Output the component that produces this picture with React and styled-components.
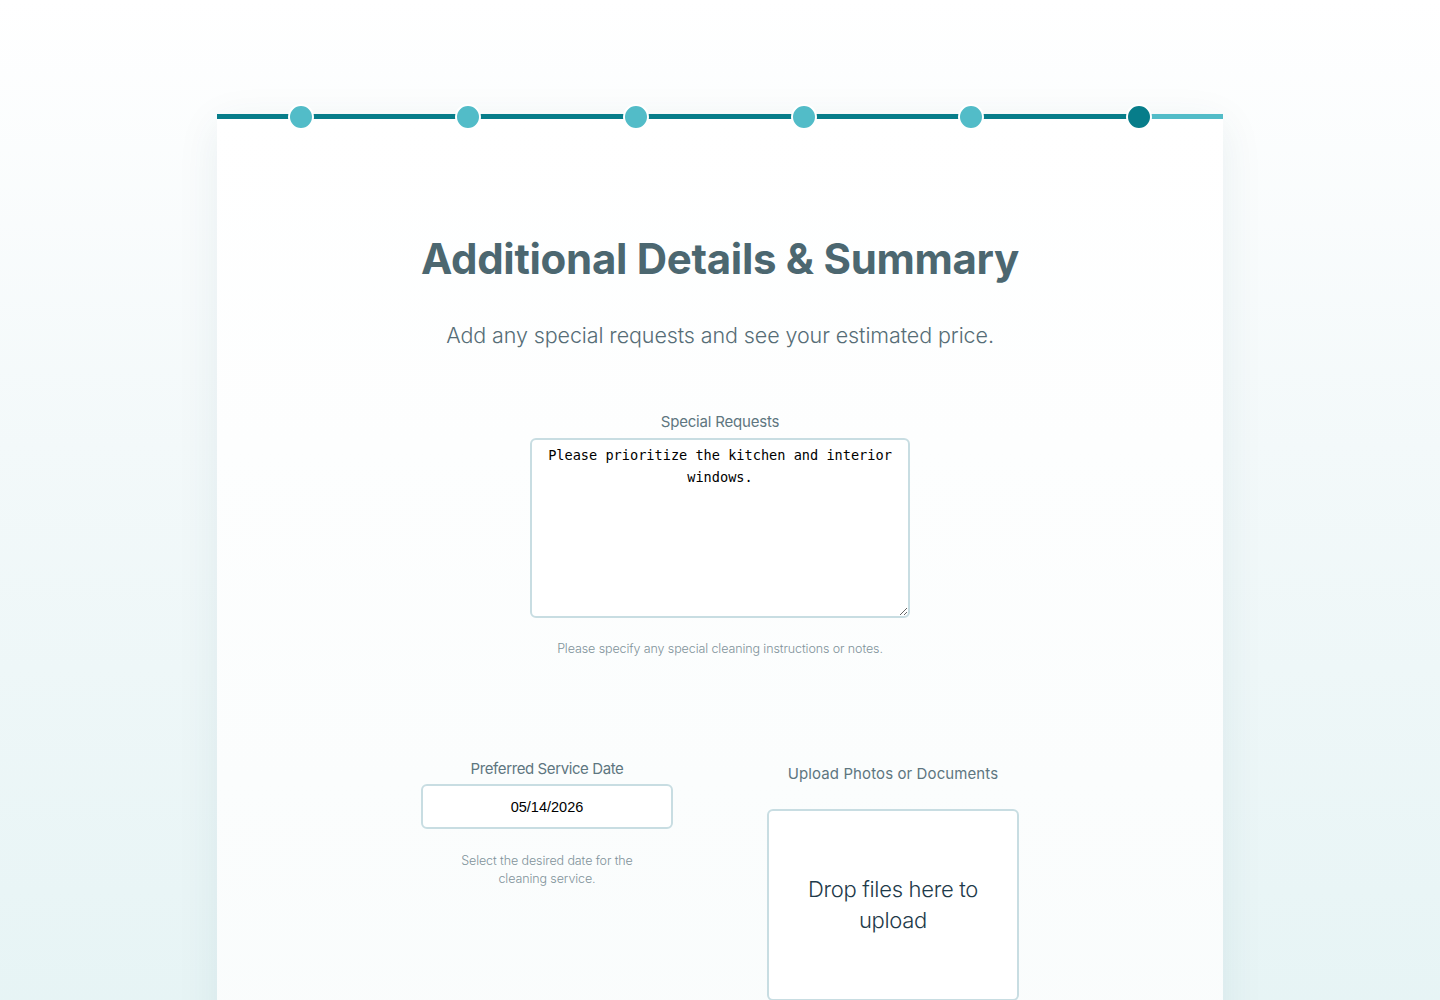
import React from 'react';
import styled, { createGlobalStyle } from 'styled-components';

const GlobalStyle = createGlobalStyle`
  * {
    box-sizing: border-box;
  }

  body {
    margin: 0;
    font-family: Inter, 'Noto Sans', sans-serif;
  }
`;

const Page = styled.div`
  min-height: 100vh;
  padding-top: 114px;
  background: linear-gradient(180deg, #ffffff 0%, #f3f9fa 40%, #e4f3f4 100%);
  overflow: hidden;
`;

const Card = styled.div`
  width: 1006px;
  height: 1000px;
  margin: 0 auto;
  background: linear-gradient(180deg, #ffffff 0%, #f9fcfc 100%);
  box-shadow: 0 10px 40px rgba(20, 80, 90, 0.08);
`;

const Progress = styled.div`
  display: grid;
  grid-template-columns: repeat(6, 1fr);
  grid-template-rows: 5px;
  height: 5px;
  background: linear-gradient(90deg, #077d8a 91.67%, #52bcc8 91.67%);
`;

const Step = styled.div`
  height: 5px;
  display: flex;
  align-items: center;
  justify-content: center;
`;

const Dot = styled.span`
  width: 26px;
  height: 26px;
  flex: none;
  border-radius: 50%;
  border: 2px solid #ffffff;
  background: ${(props) => (props.$active ? '#077d8a' : '#52bcc8')};
`;

const Content = styled.div`
  display: flex;
  flex-direction: column;
  align-items: center;
  padding-top: 114px;
`;

const Title = styled.h1`
  margin: 0;
  font-size: 42px;
  line-height: 52px;
  font-weight: 700;
  color: #4c6770;
  letter-spacing: -0.3px;
`;

const Subtitle = styled.p`
  margin: 36px 0 0;
  font-size: 21.5px;
  line-height: 29px;
  font-weight: 300;
  color: #566d76;
  letter-spacing: -0.1px;
`;

const Field = styled.div`
  display: flex;
  flex-direction: column;
  align-items: center;
  margin-top: ${(props) => props.$top || 0}px;
`;

const Label = styled.label`
  font-size: 15px;
  line-height: 20px;
  font-weight: 400;
  color: #5e7680;
  letter-spacing: ${(props) => props.$spacing ?? -0.2}px;
  margin-bottom: ${(props) => props.$gap || 6}px;
`;

const TextArea = styled.textarea`
  width: 380px;
  height: 180px;
  padding: 4px 14px;
  border: 2px solid #c8dde2;
  border-radius: 6px;
  background: #ffffff;
  font-family: 'DejaVu Sans Mono', 'Liberation Mono', monospace;
  font-size: 13.6px;
  line-height: 22px;
  color: #000000;
  text-align: center;
  resize: vertical;
  outline: none;
`;

const Hint = styled.p`
  margin: ${(props) => props.$top || 22}px 0 0;
  max-width: ${(props) => props.$width || 400}px;
  font-size: 12.5px;
  line-height: 18px;
  font-weight: 300;
  color: #7f929a;
  text-align: center;
  letter-spacing: -0.1px;
`;

const Row = styled.div`
  display: grid;
  grid-template-columns: 252px 252px;
  column-gap: 94px;
  align-items: start;
  margin-top: 101px;
`;

const DateInput = styled.input`
  width: 252px;
  height: 45px;
  border: 2px solid #c8dde2;
  border-radius: 6px;
  background: #ffffff;
  font-family: 'Liberation Sans', Arial, sans-serif;
  font-size: 14.5px;
  color: #000000;
  text-align: center;
  outline: none;
`;

const DropZone = styled.div`
  width: 252px;
  height: 192px;
  padding: 0 24px;
  display: flex;
  align-items: center;
  justify-content: center;
  border: 2px solid #c8dde2;
  border-radius: 6px;
  background: #ffffff;
  font-size: 22px;
  line-height: 31px;
  font-weight: 300;
  color: #1e3a4a;
  text-align: center;
  letter-spacing: -0.3px;
`;

const steps = [false, false, false, false, false, true];

export default function App() {
  return (
    <>
      <GlobalStyle />
      <Page>
        <Card>
          <Progress>
            {steps.map((active, i) => (
              <Step key={i}>
                <Dot $active={active} />
              </Step>
            ))}
          </Progress>

          <Content>
            <Title>Additional Details &amp; Summary</Title>
            <Subtitle>Add any special requests and see your estimated price.</Subtitle>

            <Field $top={62}>
              <Label htmlFor="requests">Special Requests</Label>
              <TextArea
                id="requests"
                defaultValue="Please prioritize the kitchen and interior windows."
              />
              <Hint>Please specify any special cleaning instructions or notes.</Hint>
            </Field>

            <Row>
              <Field>
                <Label htmlFor="date" $gap={5} $spacing={-0.4}>
                  Preferred Service Date
                </Label>
                <DateInput id="date" type="text" defaultValue="05/14/2026" />
                <Hint $top={23} $width={190}>
                  Select the desired date for the cleaning service.
                </Hint>
              </Field>

              <Field $top={5}>
                <Label $gap={25} $spacing={0.1}>
                  Upload Photos or Documents
                </Label>
                <DropZone>Drop files here to upload</DropZone>
              </Field>
            </Row>
          </Content>
        </Card>
      </Page>
    </>
  );
}
